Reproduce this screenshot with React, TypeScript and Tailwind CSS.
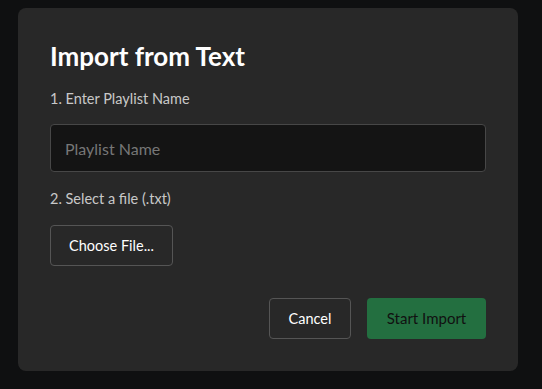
const App = () => {
    return (
        <div className="min-h-screen w-full bg-[#0f1011] pt-2 pl-[18px]" style={{ fontFamily: 'Lato, "Noto Sans", sans-serif' }}>
            <div className="w-[500px] rounded-lg bg-[#282828] p-8">
                <h2 className="text-[26px] leading-8 font-bold text-white mb-[17px]">Import from Text</h2>

                {/* Step 1 */}
                <label className="block text-[14.5px] leading-5 text-[#c8c8c8] mb-[15px]">1. Enter Playlist Name</label>
                <input
                    type="text"
                    placeholder="Playlist Name"
                    className="block w-full h-12 px-[14px] rounded bg-[#141414] border border-[#474747] text-base text-white placeholder:text-[#777] outline-none"
                />

                {/* Step 2 */}
                <label className="block mt-[17px] text-[14.5px] leading-5 text-[#c8c8c8] mb-4">2. Select a file (.txt)</label>
                <button className="h-[41px] w-[123px] rounded border border-[#555] bg-transparent text-[14.5px] text-white">Choose File...</button>

                <div className="flex justify-end gap-4 mt-8">
                    <button className="h-[41px] w-[82px] rounded border border-[#555] text-[14.5px] text-white">Cancel</button>
                    <button className="h-[41px] w-[119px] rounded bg-[#236f40] text-[15px] text-[#111]">Start Import</button>
                </div>
            </div>
        </div>
    );
};

export default App;
